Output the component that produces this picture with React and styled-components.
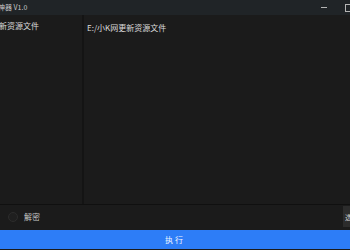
import React from 'react';
import styled, { createGlobalStyle } from 'styled-components';

const Global = createGlobalStyle`
  html, body {
    margin: 0;
    padding: 0;
    background: #1b1b1b;
    overflow: hidden;
  }
  body {
    font-family: "Noto Sans CJK SC", "Noto Sans", sans-serif;
  }
`;

const Window = styled.div`
  width: 350px;
  height: 250px;
  display: flex;
  flex-direction: column;
  background: #1b1b1b;
  overflow: hidden;
`;

const TitleBar = styled.div`
  height: 15px;
  flex: none;
  display: flex;
  align-items: center;
  background: #202427;
`;

const Title = styled.span`
  margin-left: -2px;
  font-size: 7px;
  color: #c8c8c8;
  line-height: 1;
  flex: 1;
`;

const Minimize = styled.span`
  width: 6px;
  height: 1px;
  background: #b5b5b5;
  margin-right: 18px;
`;

const Maximize = styled.span`
  width: 6px;
  height: 6px;
  flex: none;
  border: 1px solid #b5b5b5;
  margin-right: -3px;
`;

const Main = styled.div`
  height: 189px;
  flex: none;
  display: flex;
  border-bottom: 1px solid #101010;
`;

const FileList = styled.div`
  width: 84px;
  flex: none;
  border-right: 2px solid #141414;
  padding-top: 5px;
  box-sizing: border-box;
`;

const FileItem = styled.div`
  font-size: 8px;
  line-height: 11px;
  color: #dcdcdc;
  margin-left: -1px;
`;

const PathPane = styled.div`
  flex: 1;
  padding: 7px 0 0 3px;
`;

const PathText = styled.div`
  font-size: 8px;
  line-height: 11px;
  color: #dcdcdc;
`;

const Options = styled.div`
  height: 23px;
  flex: none;
  display: flex;
  align-items: center;
  padding-left: 8px;
`;

const Radio = styled.span`
  width: 8px;
  height: 8px;
  border-radius: 50%;
  border: 1px solid #2c2c2c;
  background: #1f1f1f;
  margin-right: 6px;
`;

const Label = styled.span`
  font-size: 8px;
  color: #c8c8c8;
  flex: 1;
`;

const SideButton = styled.button`
  height: 21px;
  width: 20px;
  margin-right: -13px;
  border: none;
  background: #2c2c2c;
  color: #cfcfcf;
  font-size: 7px;
  padding: 0 0 0 2px;
  text-align: left;
  font-family: inherit;
`;

const RunButton = styled.button`
  height: 19px;
  flex: none;
  margin-top: 2px;
  border: none;
  background: #2d7df7;
  color: #f2f6ff;
  font-size: 8px;
  letter-spacing: 2px;
  font-family: inherit;
  padding: 0;
`;

export default function App() {
  return (
    <>
      <Global />
      <Window>
        <TitleBar>
          <Title>神器 V1.0</Title>
          <Minimize />
          <Maximize />
        </TitleBar>
        <Main>
          <FileList>
            <FileItem>新资源文件</FileItem>
          </FileList>
          <PathPane>
            <PathText>E:/小K网更新资源文件</PathText>
          </PathPane>
        </Main>
        <Options>
          <Radio />
          <Label>解密</Label>
          <SideButton>选择</SideButton>
        </Options>
        <RunButton>执行</RunButton>
      </Window>
    </>
  );
}
